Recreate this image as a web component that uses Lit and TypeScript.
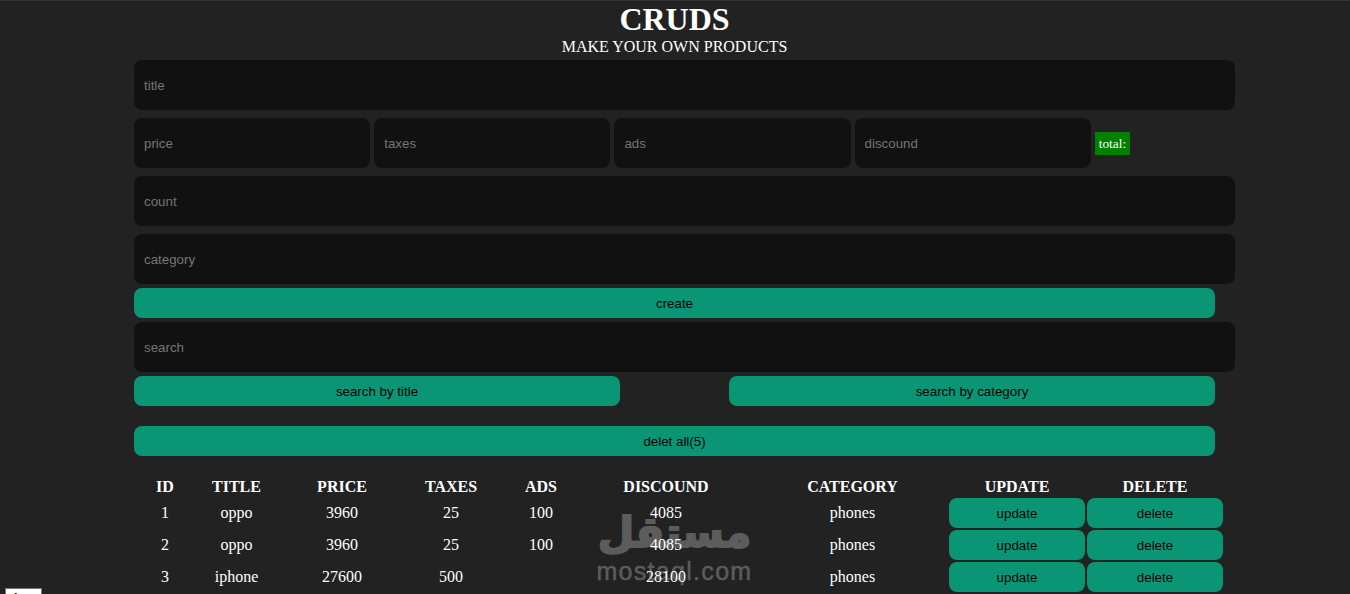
import { LitElement, html, css } from "lit";
import { customElement } from "lit/decorators.js";

const rows = [
  ["1", "oppo", "3960", "25", "100", "4085", "phones"],
  ["2", "oppo", "3960", "25", "100", "4085", "phones"],
  ["3", "iphone", "27600", "500", "", "28100", "phones"],
];

const widths = [36, 103, 104, 110, 66, 180, 189, 136, 136];

@customElement("app-root")
export class AppRoot extends LitElement {
  static styles = css`
    :host { display: block; height: 594px; overflow: hidden; background: #222; color: #fff; font-family: "Liberation Serif", serif; position: relative; border-top: 1px solid #333; box-sizing: border-box; }
    .crud { width: 1101px; margin-left: 134px; position: relative; z-index: 1; }
    .head { text-align: center; width: 1081px; }
    h2 { margin: 0; font-size: 32px; line-height: 37px; font-weight: 700; }
    p { margin: 0; font-size: 16px; line-height: 18px; padding-bottom: 4px; }
    input { display: block; width: 100%; height: 50px; box-sizing: border-box; border: 0; outline: 0; background: #111; border-radius: 8px; padding: 4px 10px; margin: 0 0 8px; color: #fff; font-family: "Liberation Sans", sans-serif; font-size: 13.33px; }
    input::placeholder { color: #757575; }
    .price { display: flex; align-items: center; gap: 4px; }
    .price input { width: 236.2px; flex: none; }
    .total { background: green; font-size: 13.33px; padding: 4px; height: 23px; width: 35px; box-sizing: border-box; line-height: 16px; margin-bottom: 8px; color: #fff; white-space: nowrap; }
    button { display: block; border: 0; border-radius: 8px; background: #0a9574; color: #000; font-family: "Liberation Sans", sans-serif; font-size: 13.33px; height: 30px; padding: 0; cursor: pointer; }
    .full { width: 1081px; }
    .create { margin: -4px 0 4px; }
    .search input { margin-bottom: 4px; }
    .btns { display: flex; justify-content: space-between; width: 1081px; margin-bottom: 20px; }
    .btns button { width: 486px; }
    table { border-collapse: separate; border-spacing: 2px; table-layout: fixed; margin: 20px 0 0 11px; width: 1080px; text-align: center; }
    th { font-size: 16px; line-height: 18px; padding: 0; height: 18px; }
    td { font-size: 16px; padding: 0; height: 30px; line-height: 18px; }
    td button { width: 136px; margin: 0 auto; }
    .mark { position: absolute; left: 596px; top: 506px; width: 157px; pointer-events: none; color: #5c5c5c; text-align: center; }
    .ar { font-family: "DejaVu Sans", sans-serif; font-weight: 700; font-size: 42px; line-height: 52px; direction: rtl; -webkit-text-stroke: 2px #5c5c5c; white-space: nowrap; }
    .en { font-family: "Liberation Sans", sans-serif; font-size: 25px; line-height: 24px; letter-spacing: 1.3px; -webkit-text-stroke: 0.5px #5c5c5c; white-space: nowrap; }
    .stub { position: absolute; left: 5px; top: 587px; width: 37px; height: 20px; box-sizing: border-box; background: #fff; border: 1px solid #767676; color: #000; font: 13.33px/16px "Liberation Sans", sans-serif; padding: 1px 6px; }
  `;
  render() {
    return html`
      <div class="mark"><div class="ar">مستقل</div><div class="en">mostaql.com</div></div>
      <div class="crud">
        <div class="head"><h2>CRUDS</h2><p>MAKE YOUR OWN PRODUCTS</p></div>
        <input placeholder="title" />
        <div class="price">
          <input placeholder="price" /><input placeholder="taxes" /><input placeholder="ads" /><input placeholder="discound" />
          <span class="total">total:</span>
        </div>
        <input placeholder="count" />
        <input placeholder="category" />
        <button class="full create">create</button>
        <div class="search"><input placeholder="search" /></div>
        <div class="btns"><button>search by title</button><button>search by category</button></div>
        <button class="full">delet all(5)</button>
        <table>
          <colgroup>${widths.map(w => html`<col style="width:${w}px" />`)}</colgroup>
          <thead><tr>${["ID","TITLE","PRICE","TAXES","ADS","DISCOUND","CATEGORY","UPDATE","DELETE"].map(h => html`<th>${h}</th>`)}</tr></thead>
          <tbody>${rows.map(r => html`<tr>${r.map(c => html`<td>${c}</td>`)}<td><button>update</button></td><td><button>delete</button></td></tr>`)}</tbody>
        </table>
      </div>
      <div class="stub">1</div>
    `;
  }
}
